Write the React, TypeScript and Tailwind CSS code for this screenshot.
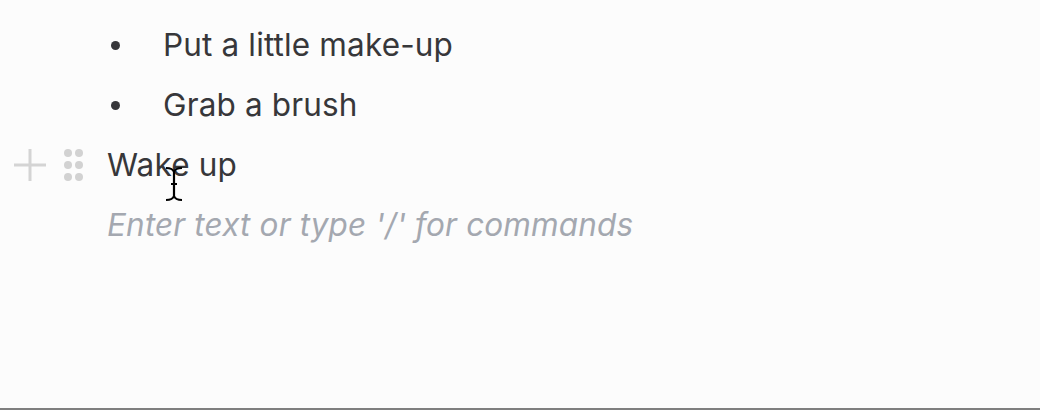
import React from "react";

function Plus() {
  return (
    <svg width="34" height="34" viewBox="0 0 34 34" className="block">
      <path d="M17 1v32M1 17h32" stroke="#d4d4d4" strokeWidth="3" fill="none" />
    </svg>
  );
}

function Grip() {
  return (
    <svg width="22" height="34" viewBox="0 0 22 34" className="block">
      {[5, 17, 29].map((y) =>
        [5, 16].map((x) => <circle key={`${x}-${y}`} cx={x} cy={y} r="4" fill="#d2d2d2" />)
      )}
    </svg>
  );
}

function IBeam() {
  return (
    <svg width="20" height="36" viewBox="0 0 20 36" className="block">
      <path d="M2 2c3 0 7 1 8 4 1-3 5-4 8-4M10 6v24M2 34c3 0 7-1 8-4 1 3 5 4 8 4M7 18h6" stroke="#000" strokeWidth="2.2" fill="none" />
    </svg>
  );
}

export default function App() {
  return (
    <div
      className="w-[1040px] h-[410px] bg-[#fcfcfc] border-b-2 border-[#7f7f7f] flex flex-col pt-[15px] text-[#37373a] tracking-[0.15px]"
      style={{ fontFamily: "Inter, 'Noto Sans', sans-serif" }}
    >
      <div className="flex items-center h-[60px] pl-[111px]">
        <span className="w-[9px] h-[9px] rounded-full bg-[#37373a]" />
        <span className="ml-[43px] text-[31.5px] leading-none">Put a little make-up</span>
      </div>
      <div className="flex items-center h-[60px] pl-[111px]">
        <span className="w-[9px] h-[9px] rounded-full bg-[#37373a]" />
        <span className="ml-[43px] text-[31.5px] leading-none">Grab a brush</span>
      </div>
      <div className="relative flex items-center h-[60px] pl-[13px]">
        <Plus />
        <div className="ml-[16px]">
          <Grip />
        </div>
        <span className="ml-[22px] text-[31.5px] leading-none">Wake up</span>
        <div className="absolute left-[164px] top-[31px]">
          <IBeam />
        </div>
      </div>
      <div className="flex items-center h-[60px] pl-[107px]">
        <span className="text-[31.5px] leading-none italic text-[#a4a8b0]">Enter text or type '/' for commands</span>
      </div>
    </div>
  );
}
